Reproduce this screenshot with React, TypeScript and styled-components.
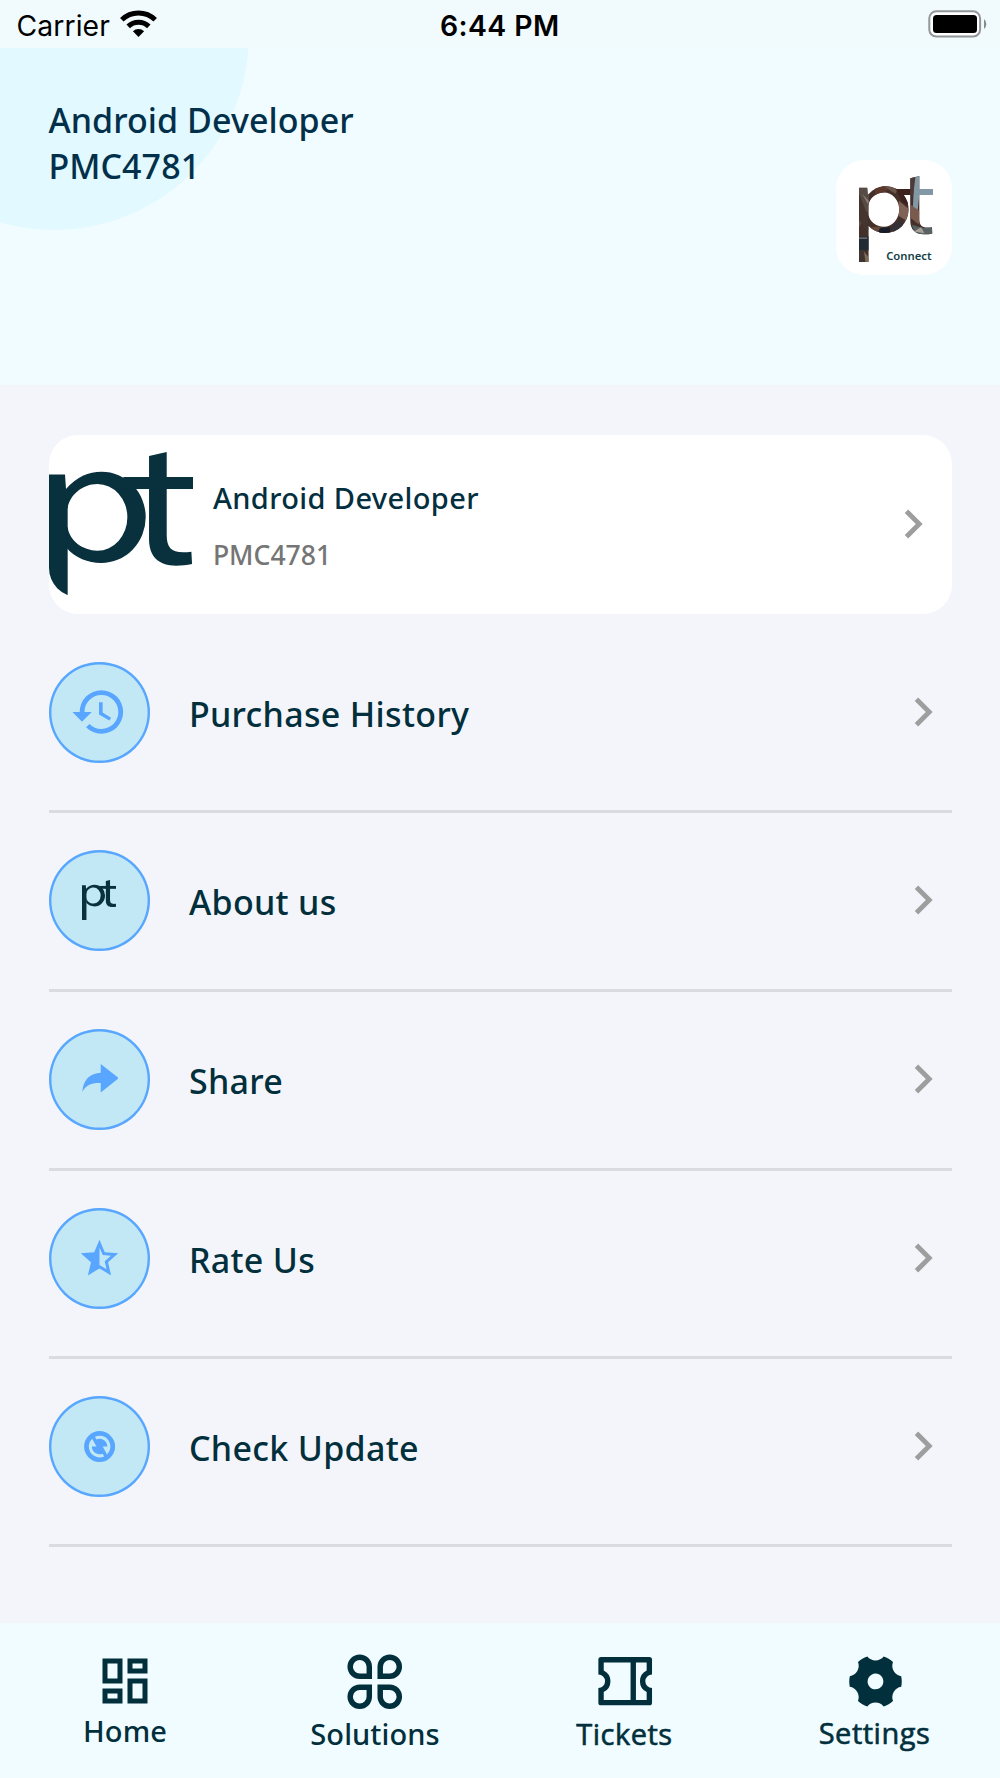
import React from "react";
import styled, { createGlobalStyle } from "styled-components";
import { MdChevronRight, MdHistory, MdOutlineDashboard, MdStarHalf } from "react-icons/md";
import { RiSettings4Fill } from "react-icons/ri";

const ink = "#012f3b";
const accent = "#58a6ff";

const GlobalStyle = createGlobalStyle`
  * { box-sizing: border-box; }
  body { margin: 0; background: #f4f5fb; }
  svg { display: block; flex: none; }
`;

const Screen = styled.div`
  width: 1000px;
  height: 1778px;
  display: flex;
  flex-direction: column;
  overflow: hidden;
  background: #f4f5fb;
  color: ${ink};
  font-family: "Noto Sans", "Open Sans", sans-serif;
  font-weight: 500;
  line-height: 1.362;
`;

const StatusBar = styled.div`
  flex: none;
  height: 48px;
  display: grid;
  grid-template-columns: 1fr auto 1fr;
  align-items: center;
  padding: 4px 13px 0 16.5px;
  background: #f1fbfe;
  color: #000;
  font-family: Inter, sans-serif;
`;

const Carrier = styled.div`
  display: flex;
  align-items: center;
  gap: 10px;
  font-size: 28.3px;
  font-weight: 400;
  letter-spacing: 0.1px;

  svg {
    margin-bottom: 5px;
  }
`;

const Clock = styled.div`
  padding-right: 4px;
  font-size: 28.4px;
  font-weight: 600;
  letter-spacing: 0.4px;
`;

const BatterySlot = styled.div`
  display: flex;
  justify-content: flex-end;
  padding-bottom: 4px;
`;

const Header = styled.header`
  flex: none;
  height: 337px;
  display: flex;
  justify-content: space-between;
  align-items: flex-start;
  padding: 49px 48.4px 0;
  background: radial-gradient(circle at 54px -13px, #e1f9ff 194.3px, #f0fcff 195.3px);
`;

const HeaderTitle = styled.div`
  font-size: 34px;
  color: #02304a;
  letter-spacing: 0.06px;
`;

const AppBadge = styled.div`
  width: 116px;
  height: 115.4px;
  margin-top: 62.9px;
  padding: 16px 20px 0 23.5px;
  display: flex;
  flex-direction: column;
  border-radius: 28px;
  background: #fff;
`;

const BadgeCaption = styled.span`
  align-self: flex-end;
  margin-top: -14px;
  font-size: 11.3px;
  font-weight: 600;
  line-height: 15px;
  color: #123f4a;
`;

const Content = styled.main`
  flex: 1;
  padding: 50px 48.4px 0 48.6px;
`;

const ProfileCard = styled.section`
  height: 178.6px;
  display: flex;
  align-items: center;
  padding-right: 9.7px;
  border-radius: 29px;
  background: #fff;
  color: #9e9e9e;
`;

const Avatar = styled.div`
  flex: none;
  width: 145px;
  height: 145px;
  border-radius: 0 0 0 29px;
  overflow: hidden;
`;

const ProfileText = styled.div`
  flex: 1;
  display: flex;
  flex-direction: column;
  gap: 19.6px;
  padding: 3.2px 0 0 19.3px;
`;

const ProfileName = styled.div`
  font-size: 29px;
  letter-spacing: 0.38px;
  color: #032f3e;
`;

const ProfileId = styled.div`
  font-size: 26.6px;
  letter-spacing: 0;
  color: #757575;
`;

const Row = styled.div<{ $top?: number; $bottom: number }>`
  display: flex;
  align-items: center;
  padding: ${(p) => p.$top ?? 37}px 0 ${(p) => p.$bottom}px;
  color: #9e9e9e;
`;

const Divider = styled.div`
  height: 3px;
  background: #dadbe0;
`;

const IconCircle = styled.div`
  flex: none;
  width: 101px;
  height: 101px;
  display: flex;
  align-items: center;
  justify-content: center;
  border-radius: 50%;
  box-shadow: inset 0 0 0 2.4px ${accent};
  background: #c3e8f5;
  color: ${accent};
`;

const RowLabel = styled.div`
  flex: 1;
  padding: 3.6px 0 0 39.3px;
  font-size: 34px;
  letter-spacing: 0.32px;
  color: ${ink};
`;

const TabBar = styled.nav`
  flex: none;
  height: 155px;
  display: flex;
  background: #f0fcff;
`;

const Tab = styled.div<{ $drop?: number }>`
  flex: 1;
  display: flex;
  flex-direction: column;
  align-items: center;
  justify-content: center;
  padding-top: ${(p) => p.$drop ?? 0}px;
`;

const TabLabel = styled.div<{ $light?: boolean }>`
  padding-right: ${(p) => (p.$light ? 1 : 0)}px;
  font-size: 29px;
  line-height: 39.5px;
  font-family: ${(p) => (p.$light ? '"Open Sans", "Noto Sans"' : '"Noto Sans"')}, sans-serif;
  font-weight: ${(p) => (p.$light ? 400 : 500)};
  letter-spacing: ${(p) => (p.$light ? 0.5 : 0.08)}px;
  -webkit-text-stroke: ${(p) => (p.$light ? "0.6px currentColor" : "0")};
`;

const LogoShapes = () => (
  <>
    <path d="M57 163.5H105L108 207H113V601H57Z" />
    <path
      fillRule="evenodd"
      clipRule="evenodd"
      d="M108 207C140 170 175 155 215 155A132 137 0 0 1 347 292A134 137 0 0 1 213 429C175 429 135 413 110 384V322H113C118 362 158 392 202 392A90 100 0 0 0 292 292A90 100 0 0 0 202 192C158 192 118 225 113 265H108Z"
    />
    <rect x="280" y="171" width="210" height="36" />
    <path d="M357 108L410 96V345C410 388 428 402 484 395L486 432C470 436 455 437 438 437C386 437 357 410 357 358Z" />
  </>
);

const Logo = ({ width }: { width: number }) => (
  <svg width={width} height={(width * 505) / 433} viewBox="57 96 433 505" fill="#08303d">
    <LogoShapes />
  </svg>
);

const PhotoLogo = () => (
  <svg width="74" height="86.5" viewBox="57 96 433 505">
    <defs>
      <clipPath id="logo-mask">
        <LogoShapes />
      </clipPath>
    </defs>
    <g clipPath="url(#logo-mask)">
      <rect x="57" y="96" width="433" height="505" fill="#44302b" />
      <path d="M57 162H120L110 300L57 400Z" fill="#564b45" />
      <path d="M57 200L110 330V430L57 350Z" fill="#45352f" />
      <path d="M75 200L115 240L110 262Z" fill="#8b7b70" />
      <path d="M57 450H115V530H57Z" fill="#202b33" />
      <path d="M57 455H105V463H57Z" fill="#7c7c79" />
      <path d="M80 530L113 570V601H90Z" fill="#7d6a58" />
      <path d="M57 530H85L95 601H57Z" fill="#3f342f" />
      <path d="M150 150H250L210 190L150 210Z" fill="#5a382c" />
      <path d="M200 155L290 160L270 200Z" fill="#6b564c" />
      <path d="M270 165H357V270L310 250Z" fill="#3c211d" />
      <path d="M290 240L350 290L340 360L290 330Z" fill="#806355" />
      <path d="M110 400L180 390L240 440H130Z" fill="#65493b" />
      <path d="M160 440L240 440V395L180 400Z" fill="#171c26" />
      <path d="M240 392L300 350L320 400L260 430Z" fill="#343136" />
      <path d="M380 96H490V207H410L400 300L370 340Z" fill="#8299a5" />
      <path d="M357 96H388L374 210H357Z" fill="#4b3a38" />
      <path d="M357 260L410 300V380L357 340Z" fill="#795a4d" />
      <path d="M365 380L430 400L486 395V440H390Z" fill="#586265" />
      <path d="M380 420L420 395L440 430Z" fill="#a9a198" />
    </g>
  </svg>
);

const WifiIcon = () => (
  <svg width="37" height="27" viewBox="0 0 37 27" fill="none" stroke="#000" strokeWidth="5">
    <path d="M1.8 9.7A24 24 0 0 1 35.2 9.7" />
    <path d="M8.2 16.4A14.8 14.8 0 0 1 28.8 16.4" />
    <path d="M18.5 27L12.9 21.2A8 8 0 0 1 24.1 21.2Z" fill="#000" stroke="none" />
  </svg>
);

const BatteryIcon = () => (
  <svg width="59" height="28" viewBox="0 0 59 28">
    <rect x="1.3" y="1.3" width="50.8" height="25.2" rx="7" fill="#fff" stroke="#929698" strokeWidth="2" />
    <rect x="5" y="5" width="44" height="18" rx="3.5" fill="#000" />
    <path d="M56 9A6.5 6.5 0 0 1 56 19Z" fill="#858a8c" />
  </svg>
);

const ShareIcon = () => (
  <svg width="38.8" height="30.4" viewBox="151 162 116 91" fill="currentColor">
    <path d="M213 162L267 204L213 247V219C188 218 168 224 158 246C160 208 182 189 213 188Z" />
  </svg>
);

const RefreshIcon = () => (
  <svg width="37.2" height="37.2" viewBox="0 0 24 24" fill="currentColor">
    <path
      fillRule="evenodd"
      d="M12 2a10 10 0 1 0 0 20a10 10 0 0 0 0-20ZM16.82 17.076A7 7 0 0 0 9.032 5.658L10.007 7.413A5 5 0 0 1 17 12H14ZM14.968 18.342L13.993 16.587A5 5 0 0 1 7 12H10L7.18 6.924A7 7 0 0 0 14.968 18.342Z"
    />
  </svg>
);

const SolutionsIcon = () => (
  <svg width="65.5" height="65.5" viewBox="0 0 24 24" fill="none" stroke="currentColor" strokeWidth="2">
    <path d="M6.5 3A3.5 3.5 0 0 1 10 6.5V10H6.5A3.5 3.5 0 0 1 6.5 3Z" />
    <path d="M17.5 3A3.5 3.5 0 0 0 14 6.5V10H17.5A3.5 3.5 0 0 0 17.5 3Z" />
    <path d="M6.5 21A3.5 3.5 0 0 0 10 17.5V14H6.5A3.5 3.5 0 0 0 6.5 21Z" />
    <path d="M17.5 21A3.5 3.5 0 0 1 14 17.5V14H17.5A3.5 3.5 0 0 1 17.5 21Z" />
  </svg>
);

const TicketIcon = () => (
  <svg width="64.4" height="64.4" viewBox="0 0 24 24" fill="currentColor">
    <path
      fillRule="evenodd"
      d="M2 9.5V4a1 1 0 0 1 1-1h18a1 1 0 0 1 1 1v5.5a2.5 2.5 0 1 0 0 5V20a1 1 0 0 1-1 1H3a1 1 0 0 1-1-1v-5.5a2.5 2.5 0 1 0 0-5zM14 5H4v2.968a4.5 4.5 0 0 1 0 8.064V19h10V5zm2 0v14h4v-2.968a4.5 4.5 0 0 1 0-8.064V5h-4z"
    />
  </svg>
);

const rows = [
  { label: "Purchase History", icon: <MdHistory size={58} />, top: 48.4, bottom: 47 },
  { label: "About us", icon: <Logo width={34.4} />, bottom: 38 },
  { label: "Share", icon: <ShareIcon />, bottom: 38 },
  { label: "Rate Us", icon: <MdStarHalf size={45} />, bottom: 47 },
  { label: "Check Update", icon: <RefreshIcon />, bottom: 47 },
];

const tabs = [
  { label: "Home", icon: <MdOutlineDashboard size={60} /> },
  { label: "Solutions", icon: <SolutionsIcon />, drop: 1.6 },
  { label: "Tickets", icon: <TicketIcon />, light: true, drop: 1.8 },
  { label: "Settings", icon: <RiSettings4Fill size={63} />, light: true, drop: 1.8 },
];

export default function App() {
  return (
    <Screen>
      <GlobalStyle />
      <StatusBar>
        <Carrier>
          Carrier
          <WifiIcon />
        </Carrier>
        <Clock>6:44 PM</Clock>
        <BatterySlot>
          <BatteryIcon />
        </BatterySlot>
      </StatusBar>
      <Header>
        <HeaderTitle>
          Android Developer
          <br />
          PMC4781
        </HeaderTitle>
        <AppBadge>
          <PhotoLogo />
          <BadgeCaption>Connect</BadgeCaption>
        </AppBadge>
      </Header>
      <Content>
        <ProfileCard>
          <Avatar>
            <Logo width={144.4} />
          </Avatar>
          <ProfileText>
            <ProfileName>Android Developer</ProfileName>
            <ProfileId>PMC4781</ProfileId>
          </ProfileText>
          <MdChevronRight size={58} />
        </ProfileCard>
        {rows.map((row) => (
          <React.Fragment key={row.label}>
            <Row $top={row.top} $bottom={row.bottom}>
              <IconCircle>{row.icon}</IconCircle>
              <RowLabel>{row.label}</RowLabel>
              <MdChevronRight size={58} />
            </Row>
            <Divider />
          </React.Fragment>
        ))}
      </Content>
      <TabBar>
        {tabs.map((tab) => (
          <Tab key={tab.label} $drop={tab.drop}>
            {tab.icon}
            <TabLabel $light={tab.light}>{tab.label}</TabLabel>
          </Tab>
        ))}
      </TabBar>
    </Screen>
  );
}
